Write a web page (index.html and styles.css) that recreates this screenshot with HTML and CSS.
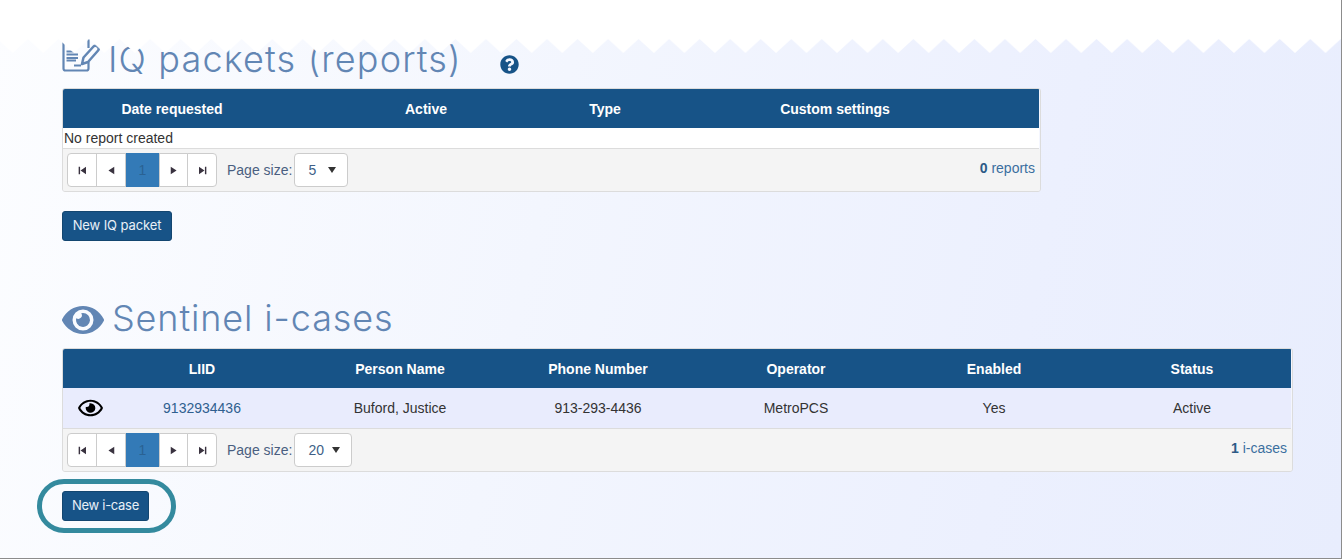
FILE: index.html
```html
<!DOCTYPE html>
<html lang="en">
<head>
<meta charset="utf-8">
<title>IQ packets and Sentinel i-cases</title>
<link rel="stylesheet" href="styles.css">
</head>
<body>
<main class="page">
  <section class="block">
    <h2 class="heading">
      <svg class="icon-report" viewBox="0 0 40 36" aria-hidden="true">
        <path d="M2.5 0V30.5a2 2 0 0 0 2 2H25.5a2 2 0 0 0 2-2V24M27.5 0V10" fill="none" stroke="currentColor" stroke-width="2.2"/>
        <path d="M5.5 13.5H13M5.5 16.5H17M5.5 20H17M5.5 22.5H15M13 27.5H20" fill="none" stroke="currentColor" stroke-width="1.8"/>
        <path d="M21 26 22.5 19.5 32.5 8.5a2.6 2.6 0 0 1 3.8 0l.6.6a2.6 2.6 0 0 1 0 3.6L27 24Z" fill="none" stroke="currentColor" stroke-width="2.5" stroke-linejoin="round"/>
      </svg>
      <span class="heading-text heading-text-iq">IQ packets (reports)</span>
      <svg class="icon-help" viewBox="0 0 512 512" aria-hidden="true"><path d="M504 256c0 136.997-111.043 248-248 248S8 392.997 8 256C8 119.083 119.043 8 256 8s248 111.083 248 248zM262.655 90c-54.497 0-89.255 22.957-116.549 63.758-3.536 5.286-2.353 12.415 2.715 16.258l34.699 26.31c5.205 3.947 12.621 3.008 16.665-2.122 17.864-22.658 30.113-35.797 57.303-35.797 20.429 0 45.698 13.148 45.698 32.958 0 14.976-12.363 22.667-32.534 33.976C247.128 238.528 216 254.941 216 296v4c0 6.627 5.373 12 12 12h56c6.627 0 12-5.373 12-12v-1.333c0-28.462 83.186-29.647 83.186-106.667 0-58.002-60.165-102-116.531-102zM256 338c-25.365 0-46 20.635-46 46 0 25.364 20.635 46 46 46s46-20.636 46-46c0-25.365-20.635-46-46-46z"/></svg>
    </h2>
    <div class="grid grid-reports">
      <div class="grid-head cols-reports">
        <div>Date requested</div><div>Active</div><div>Type</div><div>Custom settings</div>
      </div>
      <div class="empty-row">No report created</div>
      <div class="pager">
        <div class="pages">
          <a class="page-btn"><svg viewBox="0 0 10 10"><path d="M1.5 1.5H2.8V8.5H1.5ZM8.2 1.5V8.5L3.2 5Z"/></svg></a>
          <a class="page-btn"><svg viewBox="0 0 10 10"><path d="M7.5 1.5V8.5L2.2 5Z"/></svg></a>
          <a class="page-btn page-current">1</a>
          <a class="page-btn page-next"><svg viewBox="0 0 10 10"><path d="M2.5 1.5V8.5L7.8 5Z"/></svg></a>
          <a class="page-btn page-last"><svg viewBox="0 0 10 10"><path d="M8.5 1.5H7.2V8.5H8.5ZM1.8 1.5V8.5L6.8 5Z"/></svg></a>
        </div>
        <span class="size-label">Page size:</span>
        <div class="size-select size-select-sm"><span>5</span><i class="caret"></i></div>
        <div class="count"><b>0</b> reports</div>
      </div>
    </div>
    <div class="action"><button class="btn btn-iq">New IQ packet</button></div>
  </section>

  <section class="block block-second">
    <h2 class="heading">
      <svg class="icon-eye" viewBox="0 0 576 512" aria-hidden="true"><path d="M572.52 241.4C518.29 135.59 410.93 64 288 64S57.68 135.64 3.48 241.4a32.35 32.35 0 0 0 0 29.19C57.71 376.41 165.07 448 288 448s230.32-71.64 284.52-177.41a32.35 32.35 0 0 0 0-29.19zM288 400a144 144 0 1 1 144-144 143.93 143.93 0 0 1-144 144zm0-240a95.31 95.31 0 0 0-25.31 3.79 47.85 47.85 0 0 1-66.9 66.9A95.78 95.78 0 1 0 288 160z"/></svg>
      <span class="heading-text heading-text-sentinel">Sentinel i-cases</span>
    </h2>
    <div class="grid grid-cases">
      <div class="grid-head cols-cases">
        <div></div><div>LIID</div><div>Person Name</div><div>Phone Number</div><div>Operator</div><div>Enabled</div><div>Status</div>
      </div>
      <div class="case-row cols-cases">
        <div class="eye-cell"><svg class="icon-view" viewBox="0 0 576 512" aria-hidden="true"><path d="M288 144a110.94 110.94 0 0 0-31.24 5 55.4 55.4 0 0 1 7.24 27 56 56 0 0 1-56 56 55.4 55.4 0 0 1-27-7.24A111.71 111.71 0 1 0 288 144zm284.52 97.4C518.29 135.59 410.93 64 288 64S57.68 135.64 3.48 241.41a32.35 32.35 0 0 0 0 29.19C57.71 376.41 165.07 448 288 448s230.32-71.64 284.52-177.41a32.35 32.35 0 0 0 0-29.19zM288 400c-98.65 0-189.09-55-237.93-144C98.91 167 189.34 112 288 112s189.09 55 237.93 144C477.1 345 386.66 400 288 400z"/></svg></div>
        <div class="liid">9132934436</div><div>Buford, Justice</div><div>913-293-4436</div><div>MetroPCS</div><div>Yes</div><div>Active</div>
      </div>
      <div class="pager">
        <div class="pages">
          <a class="page-btn"><svg viewBox="0 0 10 10"><path d="M1.5 1.5H2.8V8.5H1.5ZM8.2 1.5V8.5L3.2 5Z"/></svg></a>
          <a class="page-btn"><svg viewBox="0 0 10 10"><path d="M7.5 1.5V8.5L2.2 5Z"/></svg></a>
          <a class="page-btn page-current">1</a>
          <a class="page-btn page-next"><svg viewBox="0 0 10 10"><path d="M2.5 1.5V8.5L7.8 5Z"/></svg></a>
          <a class="page-btn page-last"><svg viewBox="0 0 10 10"><path d="M8.5 1.5H7.2V8.5H8.5ZM1.8 1.5V8.5L6.8 5Z"/></svg></a>
        </div>
        <span class="size-label">Page size:</span>
        <div class="size-select"><span>20</span><i class="caret"></i></div>
        <div class="count"><b>1</b> i-cases</div>
      </div>
    </div>
    <div class="action action-ringed">
      <button class="btn btn-case">New i-case</button>
      <span class="ring"></span>
    </div>
  </section>

  <svg class="torn-edge" width="1342" height="53" aria-hidden="true">
    <defs>
      <pattern id="teeth" patternUnits="userSpaceOnUse" x="12.74" y="0" width="30.53" height="53">
        <path d="M0 0H30.53V53L15.265 39 0 53Z" fill="#fff"/>
      </pattern>
    </defs>
    <rect width="1342" height="53" fill="url(#teeth)"/>
  </svg>
</main>
</body>
</html>
```
FILE: styles.css
```css
* { box-sizing: border-box; }

html, body {
  margin: 0;
  padding: 0;
  background: #fff;
}

body {
  font-family: "Liberation Sans", Arial, sans-serif;
  font-size: 14px;
  color: #333;
  overflow: hidden;
}

.page {
  position: relative;
  width: 1342px;
  height: 559px;
  padding: 40px 0 0 62px;
  background: linear-gradient(102deg, #fcfdff 0%, #f3f6fe 40%, #ecf0fe 75%, #e8edfd 100%);
  border-right: 1px solid #8c8c8c;
  border-bottom: 1px solid #8c8c8c;
  overflow: hidden;
}

.torn-edge {
  position: absolute;
  left: 0;
  top: 0;
  pointer-events: none;
}

.block-second { margin-top: 59px; }

.heading {
  display: flex;
  align-items: center;
  height: 48px;
  margin: 0;
  font-family: Inter, "Liberation Sans", sans-serif;
  font-weight: 300;
  font-size: 36px;
  line-height: 48px;
  color: #6286b4;
  white-space: nowrap;
}

.heading-text { position: relative; }
.heading-text-iq { top: -5px; margin-left: 7px; letter-spacing: 1.15px; }
.heading-text-sentinel { top: -6px; margin-left: 8px; letter-spacing: 0.87px; }

.icon-report {
  flex: none;
  align-self: flex-start;
  width: 40px;
  height: 36px;
  margin: -2px 0 0 -1px;
  color: #6286b4;
}

.icon-help {
  flex: none;
  width: 19px;
  height: 19px;
  margin: 1px 0 0 38px;
  fill: #175387;
}

.icon-eye {
  flex: none;
  width: 42px;
  height: 38px;
  margin-top: -8px;
  fill: #6286b4;
}

.grid {
  border: 1px solid #dcdcdc;
  border-radius: 3px;
  overflow: hidden;
  background: #f4f6fe;
}

.grid-reports { width: 979px; }
.grid-cases { width: 1231px; }

.grid-head {
  height: 39px;
  background: #175387;
  color: #fff;
  font-weight: 700;
  line-height: 41px;
  text-align: center;
}

.cols-reports {
  display: grid;
  width: 976px;
  grid-template-columns: 218px 290px 68px 392px 8px;
}

.cols-cases {
  display: grid;
  width: 1228px;
  grid-template-columns: 40px repeat(6, 198px);
}

.empty-row {
  width: 976px;
  height: 21px;
  padding-left: 1px;
  background: #fff;
  line-height: 20px;
  border-bottom: 1px solid #dcdcdc;
}

.case-row {
  height: 41px;
  background: #e9ecfd;
  line-height: 40px;
  text-align: center;
  border-bottom: 1px solid #dcdcdc;
}

.eye-cell {
  display: flex;
  align-items: center;
  justify-content: flex-end;
}

.icon-view {
  width: 25px;
  height: 22px;
  fill: #000;
}

.liid { color: #2f5f8f; }

.pager {
  display: flex;
  align-items: center;
  height: 42px;
  padding: 0 4px;
  background: #f4f4f4;
}

.pages { display: flex; }

.page-btn {
  display: flex;
  align-items: center;
  justify-content: center;
  width: 30px;
  height: 34px;
  margin-left: -1px;
  background: #fff;
  border: 1px solid #ccc;
  color: #333;
}

.page-btn:first-child {
  margin-left: 0;
  border-radius: 4px 0 0 4px;
}

.page-btn:last-child { border-radius: 0 4px 4px 0; }

.page-btn svg {
  width: 11px;
  height: 11px;
  fill: #3a3340;
}

.page-current {
  width: 33px;
  margin-left: 0;
  background: #337ab7;
  border-color: #337ab7;
  color: #2a6293;
}

.page-next {
  width: 29px;
  margin-left: 0;
}

.size-label {
  margin-left: 10px;
  color: #4a5f80;
}

.size-select {
  display: flex;
  align-items: center;
  justify-content: space-between;
  width: 58px;
  height: 34px;
  margin-left: 2px;
  padding: 0 11px 0 13px;
  background: #fff;
  border: 1px solid #ccc;
  border-radius: 4px;
  color: #3e5f87;
}

.size-select-sm { width: 54px; }

.caret {
  display: block;
  width: 0;
  height: 0;
  border-left: 4.5px solid transparent;
  border-right: 4.5px solid transparent;
  border-top: 6px solid #333;
}

.count {
  margin-left: auto;
  margin-right: 1px;
  padding-bottom: 4px;
  color: #3b6f9f;
}

.count b { color: #2c5a86; }

.action { margin-top: 19px; }

.action-ringed {
  position: relative;
  width: 87px;
}

.btn {
  display: block;
  height: 30px;
  padding: 0 0 2px;
  background: #175387;
  border: 1px solid #134670;
  border-radius: 3px;
  color: #e8f0f7;
  font-family: Inter, "Liberation Sans", sans-serif;
  font-size: 13px;
  line-height: 26px;
  text-align: center;
}

.btn-iq { width: 110px; letter-spacing: -0.1px; }
.btn-case { width: 87px; letter-spacing: -0.3px; }

.ring {
  position: absolute;
  left: -25px;
  top: -12px;
  width: 139px;
  height: 54px;
  border: 5px solid #348a9e;
  border-radius: 27px;
  pointer-events: none;
}
```
